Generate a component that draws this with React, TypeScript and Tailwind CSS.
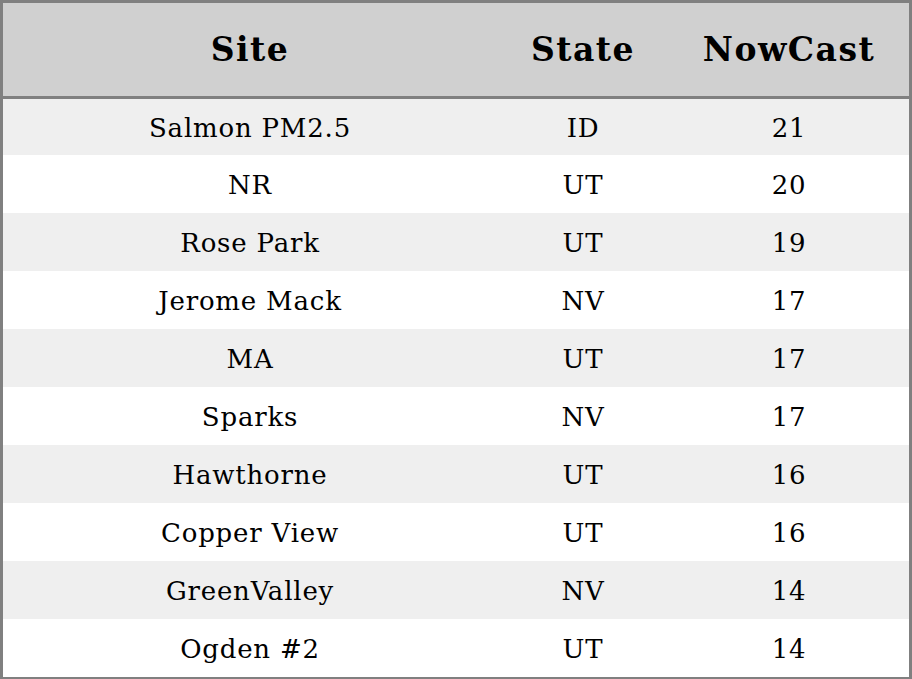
const rows = [
  { site: 'Salmon PM2.5', state: 'ID', nowcast: 21 },
  { site: 'NR', state: 'UT', nowcast: 20 },
  { site: 'Rose Park', state: 'UT', nowcast: 19 },
  { site: 'Jerome Mack', state: 'NV', nowcast: 17 },
  { site: 'MA', state: 'UT', nowcast: 17 },
  { site: 'Sparks', state: 'NV', nowcast: 17 },
  { site: 'Hawthorne', state: 'UT', nowcast: 16 },
  { site: 'Copper View', state: 'UT', nowcast: 16 },
  { site: 'GreenValley', state: 'NV', nowcast: 14 },
  { site: 'Ogden #2', state: 'UT', nowcast: 14 },
];

export default function App() {
  return (
    <div className="w-[912px] h-[679px] overflow-hidden bg-white font-['DejaVu_Serif',serif] text-black">
      <div className="border-[3px] border-[#808080]">
        <div className="grid grid-cols-[494px_172px_1fr] h-[96px] items-center bg-[#d0d0d0] border-b-[3px] border-[#808080] text-[33px] font-bold tracking-[1.5px]">
          <div className="text-center">Site</div>
          <div className="text-center">State</div>
          <div className="text-center">NowCast</div>
        </div>
        {rows.map((r, i) => (
          <div
            key={r.site}
            className={`grid grid-cols-[494px_172px_1fr] items-center pt-[2px] text-[26px] tracking-[0.8px] ${
              i === 0 ? 'h-[56px]' : 'h-[58px]'
            } ${i % 2 === 0 ? 'bg-[#efefef]' : 'bg-white'}`}
          >
            <div className="text-center">{r.site}</div>
            <div className="text-center">{r.state}</div>
            <div className="text-center">{r.nowcast}</div>
          </div>
        ))}
      </div>
    </div>
  );
}
